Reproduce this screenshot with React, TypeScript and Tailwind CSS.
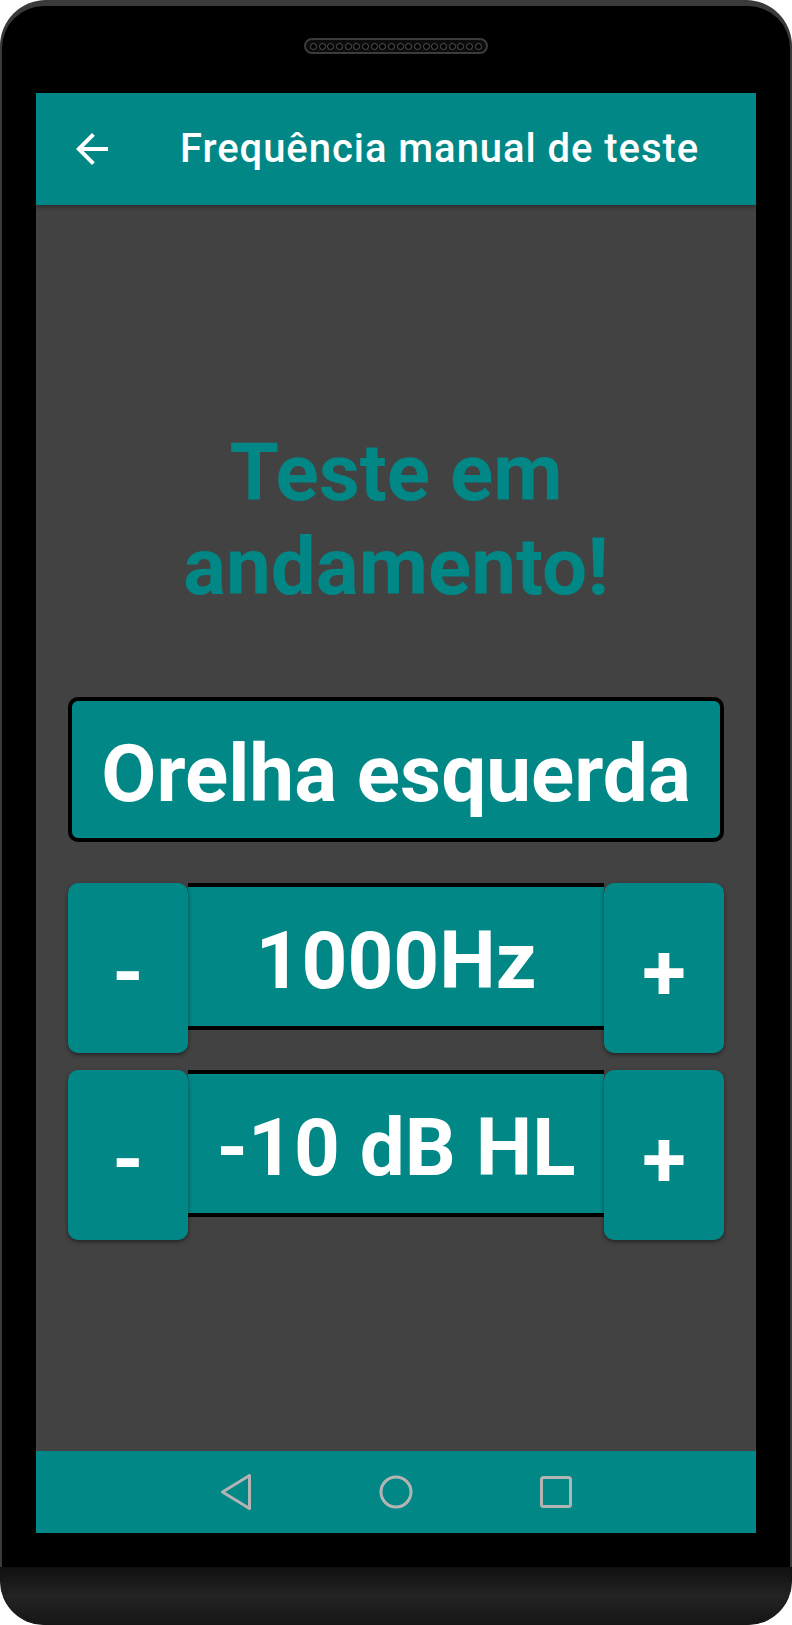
import React from 'react';

const teal = 'bg-[#018786]';

function Speaker() {
  return (
    <div className="flex h-[16px] w-[184px] items-center justify-between rounded-full border-2 border-[#3a3a3a] bg-[#0c0c0c] px-[4px]">
      {Array.from({ length: 20 }).map((_, i) => (
        <span key={i} className="h-[7px] w-[7px] rounded-full border border-[#555] bg-black" />
      ))}
    </div>
  );
}

function StepButton({ label }: { label: string }) {
  return (
    <button
      className={`relative z-10 flex h-[170px] w-[120px] shrink-0 items-center justify-center rounded-[10px] pt-[9px] text-[80px] font-bold leading-[94px] text-white shadow-[0_2px_4px_rgba(0,0,0,0.45)] ${teal}`}
    >
      {label}
    </button>
  );
}

function Stepper({ value }: { value: string }) {
  return (
    <div className="flex items-start">
      <StepButton label="-" />
      <div
        className={`flex h-[147px] flex-1 justify-center border-y-4 border-black pt-[27px] text-[80px] font-bold leading-[94px] text-white ${teal}`}
      >
        {value}
      </div>
      <StepButton label="+" />
    </div>
  );
}

export default function App() {
  return (
    <div
      className="flex h-[1625px] w-[792px] flex-col overflow-hidden rounded-t-[46px] rounded-b-[44px] bg-[#3a3a3a] px-[2px] pt-[6px]"
      style={{ fontFamily: 'Roboto, "Noto Sans", sans-serif' }}
    >
      <div className="flex flex-1 flex-col rounded-t-[42px] bg-black">
        <div className="flex h-[87px] justify-center pt-[32px]">
          <Speaker />
        </div>

        <div className="mx-[34px] flex flex-col">
          <header className={`relative z-10 flex h-[112px] items-center pl-[32px] shadow-[0_2px_4px_rgba(0,0,0,0.35)] ${teal}`}>
            <svg width="48" height="48" viewBox="0 0 24 24" fill="white">
              <path d="M20 11H7.83l5.59-5.59L12 4l-8 8 8 8 1.41-1.41L7.83 13H20v-2z" />
            </svg>
            <h1 className="ml-[64px] text-[40px] font-medium leading-none tracking-[0.95px] text-white">
              Frequência manual de teste
            </h1>
          </header>

          <main className="flex h-[1246px] flex-col bg-[#424242] px-[32px] pt-[221px]">
            <h2 className="text-center text-[80px] font-bold leading-[94px] text-[#018786]">
              Teste em
              <br />
              andamento!
            </h2>

            <div
              className={`mt-[83px] h-[145px] rounded-[10px] border-4 border-black pt-[26px] text-center text-[80px] font-bold leading-[94px] text-white ${teal}`}
            >
              Orelha esquerda
            </div>

            <div className="mt-[41px]">
              <Stepper value="1000Hz" />
            </div>
            <div className="mt-[17px]">
              <Stepper value="-10 dB HL" />
            </div>
          </main>

          <nav className={`flex h-[82px] items-center justify-center gap-[112px] ${teal}`}>
            <svg width="48" height="48" viewBox="0 0 48 48" fill="none" stroke="#b4b4b4" strokeWidth="3" strokeLinejoin="round">
              <path d="M37.5 7.5v33L10.5 24z" />
            </svg>
            <svg width="48" height="48" viewBox="0 0 48 48" fill="none" stroke="#b4b4b4" strokeWidth="3">
              <circle cx="24" cy="24" r="15" />
            </svg>
            <svg width="48" height="48" viewBox="0 0 48 48" fill="none" stroke="#b4b4b4" strokeWidth="3">
              <rect x="9.5" y="9.5" width="29" height="29" rx="2" />
            </svg>
          </nav>
        </div>
      </div>

      <div className="-mx-[2px] h-[58px] rounded-b-[44px] bg-gradient-to-b from-[#101010] via-[#232323] to-[#161616]" />
    </div>
  );
}
